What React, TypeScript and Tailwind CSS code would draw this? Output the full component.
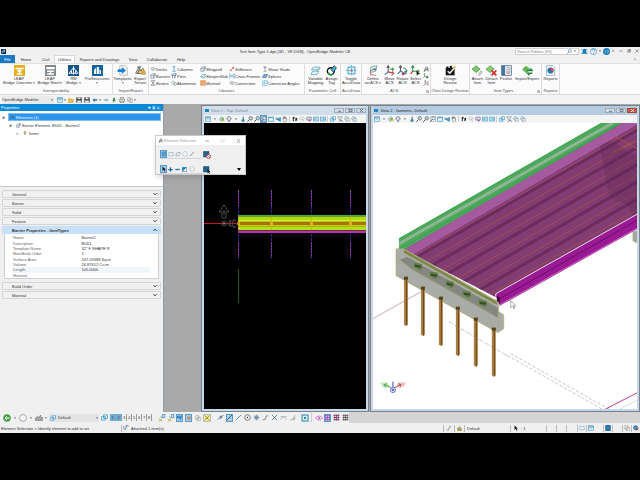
import { ReactNode, useState } from 'react';
import clsx from 'clsx';

// All glyphs are drawn on a 16x16 grid
const glyphs: Record<string, ReactNode> = {
  logo: <><rect width="16" height="16" fill="#0b2d52" /><path d="M3 11 8 4h5M3 13l6-5h4" stroke="#e8f3fc" strokeWidth="2" fill="none" /></>,
  leapConcrete: <><rect width="16" height="16" fill="#e5ae1d" /><path d="M2 4h12v2H2zM5 7h6v2l-2 1v2h3v2H4v-2h3v-2L5 9z" fill="#fff" /></>,
  leapSteel: <><rect width="16" height="16" fill="#85888b" /><path d="M2 3h12v3H2zM3 8h10v2H9v2h4v2H3v-2h4v-2H3z" fill="#fff" /></>,
  rmBridge: <><rect width="16" height="16" fill="#145488" /><path d="M8 2v12M2 11 8 4l6 7M1 12h14M5 12V8m6 4V8" stroke="#fff" strokeWidth="1.4" fill="none" /></>,
  pro: <><rect width="16" height="16" fill="#12639a" /><path d="M3 13V7l3-3v9zM7 13V3h3v10zM11 13V6l2 2v5z" fill="#fff" /></>,
  templates: <><path d="M4 1h8l3 3v11H4z" fill="#f5f5f5" stroke="#aaa" /><path d="M1 6h6V3l6 5-6 5v-3H1z" fill="#1c7fca" /></>,
  terrain: <><path d="M1 12 5 4l4 3 3-2 3 8z" fill="#ded5a0" stroke="#4a4a40" /><path d="M3 3h5m-2-2 2 2-2 2M4 13l2-6 4 2 2 4" stroke="#333" fill="none" /><path d="M9 9h6v5H9z" fill="#e2a33a" /></>,
  deck: <path d="M1 7c3-4 8-4 14 0-3 6-9 6-14 0zM5 8h6" fill="none" stroke="#647484" strokeWidth="1.4" />,
  barrier: <path d="M2 14V7l4-5h8l-4 5v7zM2 7h8l4-5v7l-4 5" fill="#eef3f7" stroke="#556575" strokeWidth="1.3" />,
  beam: <path d="M2 2h12M2 14h12M4 3l4 5-4 5M12 3 8 8l4 5" fill="none" stroke="#555" strokeWidth="1.5" />,
  column: <path d="M4 2h8M8 2v11M3 14h10" stroke="#3293cf" strokeWidth="1.8" fill="none" />,
  pier: <path d="M1 5l5-3h9l-3 4H1zM4 6v8M9 6v8M12 4v8" stroke="#44617a" strokeWidth="1.5" fill="none" />,
  abutment: <path d="M1 8 6 2l4 4-5 6zM8 9l5-3 2 6-6 3z" fill="#f5f5f5" stroke="#5c7082" strokeWidth="1.2" />,
  sleeper: <path d="M1 10l6-6h8l-5 6zM5 13h7l3-5" fill="none" stroke="#258db5" strokeWidth="1.5" />,
  material: <><rect x="1" y="1" width="14" height="14" fill="#e5812b" /><path d="M1 6h14M1 11h14M6 1v14M11 1v14" stroke="#fff2de" /></>,
  stiffener: <path d="M2 14 14 2M2 9l5 5M8 3l5 5" stroke="#b43c39" strokeWidth="1.8" fill="none" />,
  frames: <path d="M2 1v14M14 1v14M2 4l12 8M2 12l12-8" stroke="#3c91c5" strokeWidth="1.5" fill="none" />,
  splice: <path d="M1 12 5 4h10l-4 8zM4 8h8" fill="#9fcbe5" stroke="#175f8c" strokeWidth="1.5" />,
  stud: <path d="M5 2h6v3H5zM8 5v9M4 14h8" stroke="#60707b" strokeWidth="1.4" fill="none" />,
  angle: <path d="M2 1v14h12M6 2v8h8V2z" stroke="#269ac9" strokeWidth="1.5" fill="none" />,
  mapping: <><path d="M5 3h9l-3 4H2zM4 9h9l-3 5H1z" fill="#e5f2f8" stroke="#3e9cc0" /><path d="m13 7 2-3m-5 5 2-2" stroke="#3a8a52" /></>,
  tag: <><circle cx="7" cy="9" r="5" fill="#fff" stroke="#111" strokeWidth="2" /><path d="m7 6 5-5 3 3-4 7z" fill="#43a8d8" stroke="#222" /><path d="m3 11 4 4 3-2" stroke="#269b50" strokeWidth="2" fill="none" /></>,
  accu: <><rect x="3" y="3" width="10" height="10" fill="#e8f6fc" stroke="#3aa5d8" strokeWidth="1.5" /><path d="M8 0v16M0 8h16" stroke="#3aa5d8" strokeDasharray="3 1" /><circle cx="8" cy="8" r="2" fill="#d67463" /></>,
  define: <><path d="M4 3 13 1 11 9 3 11z" fill="#e1f1e8" stroke="#53938b" /><path d="M4 15V8l8-3M4 14l8 1" stroke="#bd4441" fill="none" /><path d="m7 6 5 1" stroke="#2b7bb8" strokeWidth="2" /></>,
  acsMove: <><path d="M6 10V2M4 4l2-3 2 3" stroke="#555" strokeWidth="1.5" fill="none" /><path d="M6 10 1 14" stroke="#3b6cc6" strokeWidth="1.8" /><path d="m6 10 8 2-2-3m2 3-3 3" stroke="#bf3838" strokeWidth="1.5" fill="none" /><path d="M9 6h5m-2-2 2 2-2 2" stroke="#2d934a" strokeWidth="1.5" fill="none" /></>,
  acsRotate: <><path d="M5 9V2M3 4l2-3 2 3" stroke="#555" strokeWidth="1.5" fill="none" /><path d="M5 9 1 13m4-4 9 4" stroke="#3b6cc6" strokeWidth="1.6" /><path d="M9 4q6 1 4 7m-2-2 2 2 2-3" stroke="#2d934a" strokeWidth="1.5" fill="none" /><circle cx="9" cy="13" r="2" fill="#bf3838" /></>,
  acsSelect: <><path d="M4 9V2M2 4l2-3 2 3M4 9h9m-2-2 2 2-2 2" stroke="#2d934a" strokeWidth="1.6" fill="none" /><path d="M4 9 1 13" stroke="#bf3838" strokeWidth="1.8" /><path d="m9 8 6 5-3 .500-2 2z" fill="#222" /></>,
  review: <><path d="M1 4h13v11H1z" fill="#171717" /><path d="M2 2h3v3H2zM7 1h3v4H7z" fill="#171717" /><path d="m4 9 3 3 7-8" stroke="#fff" strokeWidth="2" fill="none" /><path d="m11 5 3-4 2 2-4 3z" fill="#e0b52e" /></>,
  attach: <><path d="m6 1 6 5-6 5-6-5z" fill="#7fc66b" stroke="#499641" /><path d="m9 14 4-5q2 0 1 2l-4 5" fill="none" stroke="#777" /></>,
  detach: <><path d="m6 1 6 5-6 5-6-5z" fill="#8acb79" stroke="#499641" /><path d="m8 8 7 7m0-7-7 7" stroke="#d52727" strokeWidth="2.5" /></>,
  picklist: <><rect x="1" y="1" width="14" height="14" fill="#eef4fa" stroke="#385c80" /><path d="M1 1h5v14H1z" fill="#4577a8" /><path d="M8 4h6M8 7h6M8 10h6" stroke="#777" /><path d="M8 12h5" stroke="#bd4141" /></>,
  impexp: <><path d="m6 1 6 5-6 6-6-6z" fill="#67b850" /><path d="M7 8h8l-3-3M15 12H8l3 3" stroke="#238046" strokeWidth="2" fill="none" /></>,
  reports: <><path d="M2 1h9l3 3v11H2z" fill="#fff" stroke="#7396b6" /><circle cx="8" cy="8" r="4.5" fill="#2672b2" /><path d="M8 8V3.500a4.500 4.500 0 0 1 4 6z" fill="#dc4b34" /></>,
  undo: <path d="M1 8 7 3v3h7v4H7v3z" fill="#257bb8" />,
  redo: <path d="m15 8-6-5v3H2v4h7v3z" fill="#91bad6" />,
  folder: <path d="M1 4h5l2 2h7l-2 9H1z" fill="#edbb4f" stroke="#c4932c" />,
  save: <><path d="M1 1h14v14H1z" fill="#26272b" /><path d="M4 1h8v5H4zM3 9h10v6H3z" fill="#e9edf0" /></>,
  view: <><rect x="1" y="2" width="14" height="12" fill="#e9f6fc" stroke="#388fbc" strokeWidth="1.5" /><path d="M1 5h14" stroke="#388fbc" strokeWidth="2.5" /><path d="m4 11 3-3 4 3" stroke="#38909d" fill="none" /></>,
  pin: <path d="m5 3 6-2-1 5 3 4-4 1-4 4 1-5-3-2 4-2z" fill="#33834c" />,
  print: <path d="M4 1h8v5h3v6h-3v3H4v-3H1V6h3zM4 6h8M4 11h8" fill="#eef1e8" stroke="#566256" strokeWidth="1.4" />,
  copy: <path d="M2 2h8v9H2zM6 6h8v9H6z" fill="#fff" stroke="#777" strokeWidth="1.3" />,
  bulb: <path d="M3 6a5 5 0 1 1 10 0L10 11v4H6v-4z" fill="#b6bb65" stroke="#636836" />,
  search: <><circle cx="9" cy="6" r="4.500" fill="none" stroke="#3384b7" strokeWidth="2" /><path d="m6 10-5 5" stroke="#3384b7" strokeWidth="2.5" /></>,
  bell: <path d="M1 3h2v2H1zM13 3h2v2h-2zM1 11h2v2H1zM13 11h2v2h-2zM4 4q4-5 8 0v6l2 3H2l2-3z" fill="#1578b5" />,
  help: <><circle cx="8" cy="8" r="7" fill="#fff" stroke="#2585bd" strokeWidth="1.5" /><path d="M5 6q0-3 3-3t3 3q0 1.500-3 3v1M8 12v1.500" stroke="#2585bd" strokeWidth="1.8" fill="none" /></>,
  user: <><circle cx="8" cy="8" r="8" fill="#2382bd" /><path d="M4 6h3v4H4M9 6h3v4H9" stroke="#9fcce8" strokeWidth="1.2" fill="none" /></>,
  shade: <><path d="M2 6 7 2l5 3v6l-6 3-4-3z" fill="#b7d9c7" stroke="#4b897d" /><path d="m6 11 4-8 4 8z" fill="#55ad69" /><circle cx="12" cy="12" r="3" fill="#e7c33a" /></>,
  bright: <><circle cx="8" cy="7" r="5" fill="#e1e8ed" stroke="#52687a" strokeWidth="1.5" /><path d="M5 13h6M6 15h4M8 0v3M1 7h3m8 0h3" stroke="#52687a" strokeWidth="1.5" /></>,
  brush: <path d="M7 1h3v7l2 2v5H4v-5l3-2z" fill="#45849f" />,
  zoomIn: <><circle cx="10" cy="6" r="4.500" fill="#f3f8fb" stroke="#425968" strokeWidth="2" /><path d="m6 10-5 5" stroke="#4f4038" strokeWidth="2.5" /><path d="M8 6h4M10 4v4" stroke="#3184bd" /></>,
  zoomWin: <><path d="M1 1h14v14H1z" fill="none" stroke="#6d8190" /><circle cx="9" cy="6" r="4" fill="#fff" stroke="#374b59" strokeWidth="1.5" /><path d="m6 9-5 6" stroke="#333" strokeWidth="2" /></>,
  fit: <path d="M1 3h14v11H1zM1 5h14" fill="#fff" stroke="#3291c5" strokeWidth="2" />,
  rotate: <path d="M1 8 6 4v3h5v6M12 4v10h3V4z" fill="#2f8dc5" stroke="#2879aa" />,
  pan: <path d="m4 9-2-4 3 2V1l2 5 1-4 1 5 3-2v8l-3 3H6z" fill="#fff" stroke="#333" strokeWidth="1.2" />,
  walk: <path d="M2 3q4-3 5 1L5 9H2zM9 6q4-3 5 1l-2 6H9zM2 10h3v3H2zM9 14h3" fill="#1d242a" />,
  fly: <path d="M1 7q7-9 14 0-7 8-14 0zM8 7l5 8" fill="none" stroke="#999" strokeWidth="1.2" />,
  navigate: <><path d="M2 3h12v8H2z" fill="#d3dde9" stroke="#556b88" strokeWidth="1.5" /><path d="m6 8 7 4-4 3z" fill="#b33d51" /></>,
  prev: <path d="M1 3h14v10H1zM13 8H4m3-3L4 8l3 3" fill="#fff" stroke="#2588bd" strokeWidth="1.8" />,
  next: <path d="M1 3h14v10H1zM3 8h9M9 5l3 3-3 3" fill="#fff" stroke="#2588bd" strokeWidth="1.8" />,
  cascade: <path d="M6 2h9v8H6zM1 6h9v8H1z" fill="#e5f5fc" stroke="#2e8fbd" strokeWidth="1.6" />,
  clip: <><path d="M2 2h12l-4 6v5l-4 2V8z" fill="#edf3f5" stroke="#536c79" strokeWidth="1.3" /><path d="m10 10 5 5" stroke="#333" strokeWidth="2" /></>,
  clipMask: <><circle cx="7" cy="7" r="5" fill="#e6f1f6" stroke="#4889a7" strokeWidth="1.5" /><path d="M7 7h7v7H7z" fill="#fff" stroke="#607887" strokeWidth="1.3" /></>,
  element: <path d="M3 15 8 2l5 3v10M6 9h7M3 14l10-7" fill="none" stroke="#555" strokeWidth="1.8" />,
  block: <rect x="2" y="4" width="12" height="9" fill="none" stroke="#589ac3" strokeDasharray="3 1" strokeWidth="1.5" />,
  shape: <path d="M2 13 5 4h9l-3 9z" fill="none" stroke="#7390a4" strokeWidth="1.4" />,
  circle: <circle cx="8" cy="8" r="6.500" fill="none" stroke="#6ba2c2" strokeDasharray="2 1" strokeWidth="1.4" />,
  line: <path d="M2 14 14 2" stroke="#456f87" strokeWidth="1.7" />,
  individual: <><rect x="2" y="2" width="12" height="12" fill="#5c9cc8" stroke="#32739e" strokeDasharray="2 1" /></>,
  cursor: <path d="M4 1v12l3-3 3 5 2-1-3-5h4z" fill="#111" />,
  plus: <path d="M8 1v14M1 8h14" stroke="#176fae" strokeWidth="4" />,
  minus: <path d="M1 8h14" stroke="#176fae" strokeWidth="4" />,
  invert: <><path d="M1 1h14v14H1z" fill="#fff" stroke="#276e9d" strokeWidth="2" /><path d="M1 15V1h14z" fill="#1780bc" /></>,
  clearSel: <><path d="M1 1h11v11H1z" fill="#20648e" stroke="#153e58" /><circle cx="11" cy="11" r="4" fill="#fff" stroke="#d33d49" strokeWidth="2" /><path d="m8 8 6 6" stroke="#d33d49" strokeWidth="1.6" /></>,
  pickSel: <><path d="M1 1h11v11H1z" fill="#20648e" stroke="#153e58" /><path d="m9 7 6 5-3 .500 2 3-1 .500-2-3-2 2z" fill="#111" /></>,
  back: <><circle cx="8" cy="8" r="7.500" fill="#429f3d" /><path d="M13 8H4m4-4L4 8l4 4" stroke="#fff" strokeWidth="2" fill="none" /></>,
  forward: <><circle cx="8" cy="8" r="7" fill="#eee" stroke="#999" strokeWidth="1.5" /><path d="M3 8h9M8 4l4 4-4 4" stroke="#fff" strokeWidth="2" fill="none" /></>,
  model: <path d="M1 8 5 5l3 2 3-5 1 5h3v6H1z" fill="#a3a8a8" stroke="#666" />,
  snapKey: <><path d="M9 1h5v6H9zM5 5l3 3" stroke="#3b8dbf" fill="#d2e8f4" strokeWidth="1.5" /><path d="m2 9 6 6m0-6-6 6" stroke="#c3a62c" strokeWidth="2" /></>,
  hbar: <path d="M1 3h14v5H1zM8 8v6" stroke="#186ea5" fill="#65acd7" strokeWidth="2" />,
  star: <path d="M8 2v12M2 8h12M4 4l8 8m0-8-8 8" stroke="#d46a31" strokeWidth="1.6" />,
  crossY: <><path d="M1 1h14v14H1z" fill="#f7e79b" stroke="#6a9dbe" /><path d="m3 3 10 10m0-10L3 13" stroke="#b49b28" strokeWidth="2" /></>,
  near: <path d="M1 13q3-3 5-3t3-4l6-3M7 5h4v4H7z" fill="none" stroke="#456c82" strokeWidth="1.6" />,
  keypoint: <path d="M2 14 14 2" stroke="#143f62" strokeWidth="1.8" />,
  center: <><circle cx="8" cy="8" r="6.500" fill="none" stroke="#333" strokeWidth="1.3" /><circle cx="8" cy="8" r="1.500" fill="#333" /></>,
  gear: <><circle cx="8" cy="8" r="4" fill="#cadce6" stroke="#51758d" strokeWidth="1.5" /><path d="M8 1v14M1 8h14M3 3l10 10m0-10L3 13" stroke="#51758d" strokeWidth="1" /></>,
  curve: <path d="M2 13q6 2 6-4t6-5" stroke="#45606f" strokeWidth="1.6" fill="none" />,
  cross: <path d="M2 2l12 12m0-12L2 14" stroke="#3f5866" strokeWidth="1.6" />,
  tangent: <path d="M1 13q7-12 14 0M1 6h14" stroke="#999" strokeWidth="1.3" fill="none" />,
  perp: <path d="M13 2v11H2m7 0V9h4" stroke="#888" strokeWidth="1.3" fill="none" />,
  origin: <><rect x="2" y="2" width="12" height="12" fill="#e1f3f9" stroke="#2982a8" strokeWidth="2" /><path d="M6 6h4v4H6z" fill="#2d88ac" /></>,
  eye: <><path d="M1 8q7-8 14 0-7 8-14 0z" fill="none" stroke="#c35bbd" strokeWidth="1.5" /><circle cx="8" cy="8" r="2" fill="#c35bbd" /></>,
  gridP: <path d="M1 3h14M1 8h14M1 13h14M3 1v14M8 1v14M13 1v14" stroke="#b045b1" strokeWidth="1.8" />,
  gridM: <path d="M1 3h14M1 8h14M1 13h14M4 1v14M8 1v14M12 1v14" stroke="#7e315f" strokeWidth="1.8" />,
  gridD: <path d="M1 3h14M1 8h14M1 13h14M4 1v14M8 1v14M12 1v14" stroke="#4e454b" strokeWidth="1.6" />,
  lock: <><path d="M5 7V4q3-4 6 0v3" fill="none" stroke="#777" strokeWidth="2" /><path d="M2 7h12v8H2z" fill="#a6a43b" stroke="#706a26" /></>,
  info: <path d="M2 3v7q4 4 6 0V2h7M8 5l3-3" fill="none" stroke="#37618b" strokeWidth="1.7" />,
  book: <path d="M2 1h12v14H2z" fill="#217fb8" stroke="#174f75" strokeWidth="2" />,
  globe: <><circle cx="7" cy="7" r="6" fill="#3c8fca" stroke="#276b9b" /><path d="m8 8 7 7m0-7-7 7" stroke="#cf3030" strokeWidth="2" /></>,
};

const Glyph = ({ name, className = 'size-[6px]' }: { name: string; className?: string }) => (
  <svg viewBox="0 0 16 16" aria-hidden="true" className={clsx('shrink-0', className)}>
    {glyphs[name]}
  </svg>
);

const Caret = () => (
  <svg viewBox="0 0 4 4" aria-hidden="true" className="size-[2px] shrink-0">
    <path d="M0 1h4L2 3.500z" fill="#333" />
  </svg>
);

const IconButton = ({ name, active = false, size = 'size-[6px]' }: { name: string; active?: boolean; size?: string }) => (
  <button
    aria-label={name}
    className={clsx('flex w-[7px] h-[8px] shrink-0 items-center justify-center', active && 'bg-[#a9cfe9] outline outline-[#5b9ac6] -outline-offset-1')}
  >
    <Glyph name={name} className={size} />
  </button>
);

type Tool = { icon: string; lines: string[]; width: string; menu?: boolean };

const BigTool = ({ icon, lines, width, menu }: Tool) => (
  <button className={clsx('flex flex-col items-center shrink-0 whitespace-nowrap leading-[4px]', width)}>
    <Glyph name={icon} className="size-[11px] mb-px" />
    {lines.map((line, i) => (
      <span key={line} className="flex items-center gap-px">
        {line}
        {menu && lines.length > 1 && i === lines.length - 1 && <Caret />}
      </span>
    ))}
    {menu && lines.length === 1 && <span className="mt-px"><Caret /></span>}
  </button>
);

const Group = ({ caption, className, launcher = false, children }: { caption: string; className: string; launcher?: boolean; children: ReactNode }) => (
  <section className={clsx('flex flex-col justify-between shrink-0 border-r border-[#dedede] pt-px', className)}>
    <div className="flex h-[24px] justify-center">{children}</div>
    <div className="flex items-center leading-[6px] whitespace-nowrap text-[#555]">
      <span className="flex flex-1 justify-center">{caption}</span>
      {launcher && (
        <svg viewBox="0 0 6 6" className="size-[3px] mr-px" fill="none" stroke="#777"><path d="M1 5V1h4M2 2l3 3m0-3v3H2" /></svg>
      )}
    </div>
  </section>
);

const libraries = [
  { width: 'w-[21px]', items: [['deck', 'Decks'], ['barrier', 'Barriers'], ['beam', 'Beams']] },
  { width: 'w-[29px]', items: [['column', 'Columns'], ['pier', 'Piers'], ['abutment', 'Abutments']] },
  { width: 'w-[29px]', items: [['barrier', 'Wingwall'], ['sleeper', 'SleeperSlab'], ['material', 'Material']] },
  { width: 'w-[33px]', items: [['stiffener', 'Stiffeners'], ['frames', 'Cross Frames'], ['deck', 'Connection']] },
  { width: 'w-[41px]', items: [['stud', 'Shear Studs'], ['splice', 'Splices'], ['angle', 'Connector Angles']] },
];

const tabs = [
  { label: 'File', width: 'w-[15px]' },
  { label: 'Home', width: 'w-[22px]' },
  { label: 'Civil', width: 'w-[17px]' },
  { label: 'Utilities', width: 'w-[21px]' },
  { label: 'Reports and Drawings', width: 'w-[49px]' },
  { label: 'View', width: 'w-[18px]' },
  { label: 'Collaborate', width: 'w-[30px]' },
  { label: 'Help', width: 'w-[18px]' },
];

const WindowControls = () => (
  <div className="flex items-center gap-[4px] pl-[3px] text-[#444]">
    {['M1 8h14', 'M3 5h8v8H3zM6 5V2h8v8h-3', 'm2 2 12 12m0-12L2 14'].map(d => (
      <button key={d} aria-label="window">
        <svg viewBox="0 0 16 16" className="size-[4px]" fill="none" stroke="currentColor" strokeWidth="2"><path d={d} /></svg>
      </button>
    ))}
  </div>
);

const TitleBar = () => (
  <header className="flex h-[8px] items-center bg-[#f0f0f0]">
    <div className="flex-1 pl-[1px]"><Glyph name="logo" className="size-[5px]" /></div>
    <h1 className="whitespace-nowrap pr-[50px]">Test Item Type 1.dgn [3D - V8 DGN] - OpenBridge Modeler CE</h1>
    <div className="flex flex-1 items-center justify-end gap-[2px] pr-px">
      <label className="flex h-[7px] w-[64px] items-center border border-[#cfcfcf] bg-white pr-px">
        <input type="search" aria-label="Search Ribbon" placeholder="Search Ribbon (F4)" className="h-[5px] w-[51px] pl-px leading-[5px] outline-none placeholder:text-[#888]" />
        <Glyph name="search" className="size-[5px] mr-[2px]" />
        <Caret />
      </label>
      <Glyph name="bell" className="size-[7px]" />
      <Glyph name="help" className="size-[7px]" />
      <Caret />
      <Glyph name="user" className="size-[7px]" />
      <Caret />
      <WindowControls />
    </div>
  </header>
);

const Tabs = () => {
  const [current, setCurrent] = useState('Utilities');
  return (
    <nav className="flex h-[9px] items-end bg-[#f0f0f0] border-b border-[#e2e2e2]">
      {tabs.map(tab => (
        <button
          key={tab.label}
          onClick={() => setCurrent(tab.label)}
          className={clsx(
            'h-[8px] whitespace-nowrap text-center leading-[7px]',
            tab.width,
            tab.label === 'File' && 'bg-[#1a79c4] text-white',
            tab.label !== 'File' && current === tab.label && 'border border-b-0 border-[#d8d8d8] bg-white'
          )}
        >
          {tab.label}
        </button>
      ))}
      <span className="ml-auto pr-[4px] leading-[7px]">^</span>
    </nav>
  );
};

const Ribbon = () => (
  <div className="flex h-[31px] bg-[#fbfbfb] border-b border-[#d9d9d9] overflow-hidden">
    <Group caption="Interoperability" className="w-[113px]">
      <BigTool icon="leapConcrete" lines={['LEAP', 'Bridge Concrete']} width="w-[35px]" menu />
      <BigTool icon="leapSteel" lines={['LEAP', 'Bridge Steel']} width="w-[27px]" menu />
      <BigTool icon="rmBridge" lines={['RM', 'Bridge']} width="w-[20px]" menu />
      <BigTool icon="pro" lines={['ProStructures']} width="w-[27px]" menu />
    </Group>
    <Group caption="Import/Export" className="w-[36px]">
      <BigTool icon="templates" lines={['Templates']} width="w-[19px]" menu />
      <BigTool icon="terrain" lines={['Export', 'Terrain']} width="w-[16px]" />
    </Group>
    <Group caption="Libraries" className="w-[156px]">
      {libraries.map(col => (
        <div key={col.items[0][1]} className={clsx('flex flex-col gap-px pt-px', col.width)}>
          {col.items.map(([icon, label]) => (
            <button key={label} className="flex h-[6px] items-center whitespace-nowrap">
              <Glyph name={icon} />
              {label}
            </button>
          ))}
        </div>
      ))}
    </Group>
    <Group caption="Parametric Cell" className="w-[36px]">
      <BigTool icon="mapping" lines={['Variable', 'Mapping']} width="w-[18px]" />
      <BigTool icon="tag" lines={['Assign', 'Tag']} width="w-[14px]" />
    </Group>
    <Group caption="AccuDraw" className="w-[21px]">
      <BigTool icon="accu" lines={['Toggle', 'AccuDraw']} width="w-[20px]" />
    </Group>
    <Group caption="ACS" className="w-[69px]" launcher>
      <BigTool icon="define" lines={['Define', 'an ACS']} width="w-[20px]" menu />
      <BigTool icon="acsMove" lines={['Move', 'ACS']} width="w-[13px]" />
      <BigTool icon="acsRotate" lines={['Rotate', 'ACS']} width="w-[13px]" />
      <BigTool icon="acsSelect" lines={['Select', 'ACS']} width="w-[13px]" />
      <div className="flex flex-col gap-px pt-px pl-px">
        <Glyph name="element" />
        <Glyph name="acsSelect" />
        <Glyph name="acsMove" />
      </div>
    </Group>
    <Group caption="iTwin Design Review" className="w-[39px]">
      <BigTool icon="review" lines={['Design', 'Review']} width="w-[20px]" />
    </Group>
    <Group caption="Item Types" className="w-[72px]" launcher>
      <BigTool icon="attach" lines={['Attach', 'Item']} width="w-[14px]" />
      <BigTool icon="detach" lines={['Detach', 'Item']} width="w-[14px]" />
      <BigTool icon="picklist" lines={['Picklist']} width="w-[15px]" />
      <BigTool icon="impexp" lines={['Import/Export']} width="w-[27px]" />
    </Group>
    <Group caption="Reports" className="w-[18px]">
      <BigTool icon="reports" lines={['Reports']} width="w-[16px]" />
    </Group>
  </div>
);

const QuickAccess = () => (
  <div className="flex h-[9px] items-center bg-[#f4f4f4] pl-[2px]">
    <label className="flex h-[8px] w-[52px] items-center bg-[#eaeaea] pr-px">
      <select aria-label="Workflow" className="w-full leading-[7px] outline-none appearance-none">
        <option>OpenBridge Modeler</option>
      </select>
      <Caret />
    </label>
    <div className="flex items-center gap-px pl-[2px]">
      <IconButton name="view" />
      <Caret />
      <IconButton name="folder" />
      <IconButton name="save" />
      <IconButton name="save" />
      <IconButton name="undo" />
      <Caret />
      <IconButton name="redo" />
      <IconButton name="pin" />
      <IconButton name="print" />
      <IconButton name="copy" />
      <Caret />
    </div>
  </div>
);

const details = [
  ['Name', 'Barrier2'],
  ['Description', 'BU01'],
  ['Template Name', '32" F SHAPE R'],
  ['MainBuild Order', '1'],
  ['Surface Area', '247.09488 Sq.m'],
  ['Volume', '26.87612 Cu.m'],
  ['Length', '105.0000'],
  ['Material', ''],
];

const Section = ({ title, open = false }: { title: string; open?: boolean }) => (
  <div>
    <button
      className={clsx(
        'flex h-[8px] w-full items-center justify-between rounded-[1px] border pl-[9px] pr-[3px]',
        open ? 'border-[#c5def5] bg-[#c9e1f8] font-bold' : 'border-[#d5d5d5] bg-[#f1f1f1]'
      )}
    >
      {title}
      <svg viewBox="0 0 16 16" aria-hidden="true" className="size-[4px]" fill="none" stroke="#222" strokeWidth="4">
        <path d={open ? 'm2 11 6-6 6 6' : 'm2 5 6 6 6-6'} />
      </svg>
    </button>
    {open && (
      <div className="mx-[2px] mb-[2px] border border-t-0 border-[#cfcfcf] bg-white px-[8px] pt-px">
        <table className="h-[43px] w-full border-collapse leading-[5px]">
          <tbody>
            {details.map(([key, value]) => (
              <tr key={key} className={clsx(key === 'Length' && 'bg-[#f0f6fb]')}>
                <th scope="row" className="w-1/2 p-0 text-left font-normal text-[#666]">{key}</th>
                <td className="p-0">{value}</td>
              </tr>
            ))}
          </tbody>
        </table>
      </div>
    )}
  </div>
);

const PropertiesPane = () => (
  <aside className="flex w-[164px] shrink-0 flex-col border-r border-[#8f9ba5] bg-[#f0f0f0]">
    <div className="flex h-[7px] items-center bg-[#0c88d5] pl-px pr-[2px] text-white">
      <h2 className="flex-1">Properties</h2>
      <svg viewBox="0 0 42 14" className="h-[4px] w-[14px]" fill="none" stroke="#fff" strokeWidth="2">
        <path d="M1 4h8L5 10z" fill="#fff" />
        <path d="M18 1h5v7h-5zM15 8h11M20.500 8v6M31 2l10 10m0-10L31 12" />
      </svg>
    </div>
    <ul className="h-[76px] border-b border-[#c4c8cc] bg-white px-[2px] pt-[2px]">
      <li className="flex h-[8px] items-center">
        <span className="w-[6px] text-[3px]">◢</span>
        <span className="flex h-full flex-1 items-center gap-[2px] border border-[#7fbdf0] bg-[#2b95ee] pl-px text-[#eaf5ff]">
          <Glyph name="element" className="size-[4px]" />
          Elements (1)
        </span>
      </li>
      <li className="flex h-[8px] items-center gap-px pl-[7px]">
        <span className="w-[6px] text-[3px]">◢</span>
        <Glyph name="barrier" className="size-[5px]" />
        Barrier Element: BU01 - Barrier2
      </li>
      <li className="flex h-[8px] items-center gap-[2px] pl-[14px]">
        <span className="w-[5px]">&gt;</span>
        <Glyph name="bulb" className="size-[4px]" />
        Items
      </li>
    </ul>
    <div className="flex flex-1 flex-col gap-px px-[2px] pt-[3px]">
      <Section title="General" />
      <Section title="Barrier" />
      <Section title="Solid" />
      <Section title="Feature" />
      <Section title="Barrier Properties - ItemTypes" open />
      <Section title="Build Order" />
      <Section title="Material" />
    </div>
  </aside>
);

const viewTools = ['view', '|', 'shade', 'bright', '|', 'brush', 'zoomIn', 'zoomIn', 'zoomWin', 'fit', 'rotate', 'pan', '-', 'walk', 'fly', 'navigate', 'prev', 'next', '-', 'cascade', 'clip', 'clipMask', 'clipMask'];

const ViewWindow = ({ title, focused = false, className, children }: { title: string; focused?: boolean; className: string; children: ReactNode }) => (
  <section className={clsx('flex min-w-0 flex-col border border-[#76838f] bg-[#c6d8e8] px-[2px] pb-[2px]', className)}>
    <div className={clsx('flex h-[9px] shrink-0 items-center gap-[2px] pl-px', focused ? 'bg-[#b5cbe1] text-[#222]' : 'bg-[#d2deea] text-[#7b8792]')}>
      <span className="h-[3px] w-[4px] bg-[#2483c4]" />
      <h2 className="flex-1">{title}</h2>
      {['minimize', 'maximize', 'close'].map(label => (
        <button
          key={label}
          aria-label={label}
          className={clsx('-ml-px flex h-[5px] w-[10px] items-center justify-center border', focused && label === 'close' ? 'border-[#a24a3c] bg-[#cf5a48] text-white' : 'border-[#a0adbb] bg-[#cfdbe8] text-[#555]')}
        >
          <svg viewBox="0 0 6 4" className="h-[3px] w-[5px]" fill="none" stroke="currentColor">
            <path d={label === 'minimize' ? 'M1 3h4' : label === 'maximize' ? 'M1 .500h4v3H1z' : 'm1 0 4 4m0-4L1 4'} />
          </svg>
        </button>
      ))}
    </div>
    <div className="flex h-[8px] shrink-0 items-center overflow-hidden bg-[#f4f4f4]">
      {viewTools.map((tool, i) => {
        if (tool === '|') return <span key={i} className="flex w-[7px] justify-center"><Caret /></span>;
        if (tool === '-') return <span key={i} className="ml-px mr-px h-[6px] w-px bg-[#ccc]" />;
        return <IconButton key={i} name={tool} active={!focused && tool === 'zoomWin'} />;
      })}
    </div>
    <div className="min-h-0 flex-1">{children}</div>
  </section>
);

const deckBands = [
  { y: 215, h: 1, fill: '#3fae3f' },
  { y: 216, h: 1, fill: '#6e9d1a' },
  { y: 217, h: 3, fill: '#a8dc14' },
  { y: 220, h: 1, fill: '#d9f03a' },
  { y: 221, h: 1, fill: '#b4c414' },
  { y: 222, h: 3, fill: '#a8720c' },
  { y: 225, h: 1, fill: '#c8cc18' },
  { y: 226, h: 1, fill: '#a8b414' },
  { y: 227, h: 3, fill: '#b0e016' },
  { y: 230, h: 1, fill: '#5c3a20' },
  { y: 231, h: 2, fill: '#c02cc0' },
];

const TopView = () => (
  <svg viewBox="203 123 163 286" preserveAspectRatio="xMinYMin slice" className="block h-full w-full bg-black">
    {[237, 270, 310, 349].map(x => (
      <g key={x}>
        <path d={`M${x + 0.5} 190v68`} stroke="#35249a" strokeDasharray="3 1" />
        <path d={`M${x + 0.5} 190v16m0 36v16`} stroke="#a03a9a" strokeDasharray="2 1" />
      </g>
    ))}
    <path d="M203 223.500h34" stroke="#c81420" />
    {deckBands.map(b => <rect key={b.y} x="237" y={b.y} width="140" height={b.h} fill={b.fill} />)}
    {[237, 270, 310, 349].map(x => <path key={x} d={`M${x} 217h1v13h-1zM${x - 1} 222h3v3h-3z`} fill="#d8b018" />)}
    <path d="M237.500 269v34" stroke="#1d5a1d" />
    <g fill="none" stroke="#4c4c4c">
      <path d="m223 205-5 7h3v6h4v-6h3zM221.500 210l1.500 2 1.500-2m-1.500 2v3" />
      <circle cx="223" cy="223.500" r="2.500" />
      <path d="M228 221h5v-2l4 4.500-4 4.500v-2h-5zM229 222l3 3m0-3-3 3" />
    </g>
    <circle cx="223" cy="223.500" r="1" fill="#999" />
  </svg>
);

const piles = [[406, 276], [423, 286], [441, 296], [458, 306], [476, 317], [494, 327]];
const seats = [[418, 265], [434, 274], [450, 283], [467, 293], [483, 302]];

// Longitudinal lines of the deck, parallel to the barriers
const girders = Array.from({ length: 30 }, (_, i) => {
  const x = 405 + i * 3.1;
  const y = 249 + i * 1.68;
  return { x, y, x2: 640, y2: y - (640 - x) * 0.575, warm: i % 5 === 2, shade: i % 5 === 4 };
});

const IsoView = () => (
  <svg viewBox="373 122 264 287" preserveAspectRatio="xMinYMin slice" className="block h-full w-full bg-white">
    <defs>
      <clipPath id="deck"><path d="M404 249 623 122h17v91L497 297z" /></clipPath>
    </defs>
    <path d="m373 318 48-27" stroke="#c9a9bb" />
    <path d="m449 321 60 35" stroke="#c4c4d4" strokeDasharray="4 1 1 1" />
    <path d="m508 355 95 54M511 353l99 56" stroke="#c3c3d3" strokeDasharray="3 2" />
    <path d="m605 409 35-18" stroke="#c43fae" />
    <path d="m620 409 20-11" stroke="#cfe6cf" />
    <path d="M633 231l4-1h3v12h-4l-3-2z" fill="#a3a796" />
    <path d="M399 238 602 122h24L404 250h-5z" fill="#4fa85d" />
    <path d="M399 243 613 122" stroke="#8fb592" strokeWidth="3" />
    <path d="M399 238 602 122M400 248 621 122" stroke="#2fa548" fill="none" />
    <path d="M404 249 623 122h17v91L497 297z" fill="#803b70" />
    <g clipPath="url(#deck)" fill="none">
      {girders.map((g, i) => (
        <path
          key={i}
          d={`M${g.x} ${g.y}L${g.x2} ${g.y2}`}
          stroke={g.warm ? '#9c5056' : g.shade ? '#6b2d5d' : '#8a4580'}
          strokeWidth={g.shade ? 3 : g.warm ? 1 : 0.5}
        />
      ))}
      <path d="M407 251 640 116" stroke="#a55a9f" strokeWidth="11" />
      <path d="M413 256 640 125" stroke="#b16468" strokeWidth="0.5" />
      <path d="m614 135 26 14M612 152l24-12" stroke="#a5573f" strokeWidth="1" />
      <path d="M600 145l10-5 32 18v60l-10-5-4-8-18-8z" fill="#56214a" fillOpacity=".25" />
    </g>
    <path d="M496 293 640 212v15L500 305z" fill="#9a1a94" />
    <path d="m500 304 140-78" stroke="#cc66c6" />
    <path d="m500 298 140-80" stroke="#6d0d6a" />
    <path d="M496 301v-8l144-81" stroke="#eadcea" fill="none" />
    <path d="M497 295l3 2v6h-3z" fill="#3a0b3c" />
    <path d="M396 248h8l93 52 2 2v9l5 3v14l-6 4-102-57z" fill="#a9aca6" />
    <path d="m400 259 7-3 91 51v10l-84-47z" fill="#84877f" />
    <path d="M404 249l93 52v3l-93-52z" fill="#7f8843" />
    {seats.map(([x, y]) => (
      <g key={x}>
        <path d={`M${x - 4} ${y - 3}l8 1v5l-3 1-5-3z`} fill="#627c44" />
        <path d={`M${x - 3} ${y - 1}l6 1v2l-6-1z`} fill="#2f4d26" />
      </g>
    ))}
    <path d="M396 248h8l93 52 2 2v9l5 3v14l-6 4-102-57zM396 259l98 55M499 311v15" fill="none" stroke="#a5a850" strokeWidth="0.500" />
    {piles.map(([x, y]) => (
      <g key={x}>
        <path d={`M${x - 2} ${y}h4v48l-2 1-2-1z`} fill="#ad8145" />
        <path d={`M${x + 0.5} ${y}v49`} stroke="#624521" />
        <path d={`M${x - 2} ${y}h4v3h-4z`} fill="#54441f" />
      </g>
    ))}
    <path d="M511 300v7l2-2 1 3 1-.500-1-2.500h2z" fill="#fff" stroke="#555" strokeWidth="0.500" />
    <g fill="none">
      <path d="M380 382h7l2 3v2h-6z" fill="#bfe8bb" />
      <path d="M397 384l3-2h6l-2 4h-7z" fill="#edbcbc" />
      <path d="m393 388-8-4m1 3-2-3 3-1" stroke="#4ea64e" />
      <path d="m393 388 8-4m-3-1 3 1-1 3" stroke="#b65757" />
      <path d="M393 387v-6" stroke="#3441a8" />
      <circle cx="393" cy="389.500" r="2.500" fill="#e4e6fc" stroke="#6670d8" />
      <circle cx="393" cy="389.500" r="1" fill="#3441c8" />
    </g>
  </svg>
);

const ElementSelection = () => (
  <section role="dialog" aria-label="Element Selection" className="absolute left-[155px] top-[31px] h-[40px] w-[91px] border border-[#c9c9c9] bg-[#f0f0f0] shadow-md">
    <div className="flex h-[9px] items-center gap-px bg-white pl-[2px] text-[#999]">
      <Glyph name="element" className="size-[5px]" />
      <h2 className="flex-1">Element Selection</h2>
      <svg viewBox="0 0 36 4" className="mr-[5px] h-[4px] w-[36px]" fill="none" stroke="#aaa">
        <path d="M1 2h4m28-2 3 4m0-4-3 4" /><path d="M17 0h3v3h-3z" stroke="#ddd" />
      </svg>
    </div>
    <div className="flex flex-col gap-[6px] px-[4px] pt-[5px]">
      <div className="flex items-center">
        <div className="flex w-[43px] border-b border-[#d5d5d5]">
          <IconButton name="individual" active />
          <IconButton name="block" />
          <IconButton name="shape" />
          <IconButton name="circle" />
          <IconButton name="line" />
        </div>
        <Glyph name="clearSel" className="size-[8px]" />
      </div>
      <div className="flex items-center">
        <div className="flex w-[43px] border-b border-[#d5d5d5]">
          <IconButton name="cursor" active />
          <IconButton name="plus" size="size-[5px]" />
          <IconButton name="minus" size="size-[5px]" />
          <IconButton name="invert" size="size-[5px]" />
          <IconButton name="circle" />
        </div>
        <Glyph name="pickSel" className="size-[8px]" />
        <span className="ml-auto">
          <svg viewBox="0 0 4 3" className="h-[3px] w-[4px]"><path d="M0 0h4L2 3z" /></svg>
        </span>
      </div>
    </div>
  </section>
);

const snapTools = ['near', 'keypoint', 'line', 'center', 'gear', 'curve', 'cross', 'tangent', 'perp'];

const BottomTools = () => (
  <div className="flex h-[11px] shrink-0 bg-[#d4d4d4]">
    <div className="flex items-center bg-[#f0f0f0] pl-[3px]">
      <Glyph name="back" className="size-[8px]" />
      <span className="px-[3px]"><Caret /></span>
      <Glyph name="forward" className="size-[8px]" />
      <span className="px-[3px]"><Caret /></span>
      <Glyph name="model" className="size-[8px]" />
      <span className="px-[2px]"><Caret /></span>
      <label className="flex h-[8px] w-[50px] items-center gap-[2px] bg-[#e3e3e3] px-px">
        <Glyph name="cascade" />
        <select aria-label="View group" className="w-full leading-[7px] outline-none appearance-none"><option>Default</option></select>
        <Caret />
      </label>
      <span className="px-[2px]"><Glyph name="cascade" className="size-[7px]" /></span>
      <div className="flex">
        {[1, 2, 3, 4, 5, 6, 7, 8].map(n => (
          <button key={n} className={clsx('h-[7px] border-r border-[#999] leading-[7px]', n < 3 ? 'w-[6px] bg-[#6aaedb]' : 'w-[5px]')}>{n}</button>
        ))}
      </div>
      <div className="flex items-center gap-[2px] pl-[6px]">
        <IconButton name="snapKey" size="size-[8px]" />
        <IconButton name="snapKey" size="size-[8px]" />
        <IconButton name="hbar" active />
        <IconButton name="star" active />
        <IconButton name="copy" />
        <IconButton name="crossY" size="size-[8px]" />
      </div>
      <div className="flex items-center gap-[2px] pl-[7px]">
        {snapTools.map(name => <IconButton key={name} name={name} active={name === 'keypoint'} size="size-[7px]" />)}
      </div>
      <div className="flex items-center gap-[2px] pl-[5px]">
        <IconButton name="origin" size="size-[8px]" />
        <span className="mx-px h-[9px] w-px bg-[#ccc]" />
        <IconButton name="eye" size="size-[8px]" />
        <IconButton name="gridP" active size="size-[7px]" />
        <IconButton name="gridM" size="size-[7px]" />
        <IconButton name="gridD" size="size-[7px]" />
      </div>
    </div>
  </div>
);

const Divider = () => <span className="h-[7px] w-px shrink-0 bg-[#bbb]" />;

const StatusBar = () => (
  <footer className="flex h-[10px] shrink-0 items-center bg-[#f0f0f0] pl-px">
    <p className="w-[120px]">Element Selection &gt; Identify element to add to set</p>
    <Divider />
    <p className="flex flex-1 items-center gap-[2px] pl-px">
      <Glyph name="info" />
      Attached 1 item(s).
    </p>
    <div className="flex items-center gap-[2px]">
      <Divider />
      <Glyph name="curve" />
      <Divider />
      <Glyph name="lock" className="size-[5px]" />
      <Divider />
      <span className="w-[41px]">Default</span>
      <Divider />
      <Glyph name="cursor" />
      <span className="w-[25px]">: 1</span>
    </div>
    <div className="flex gap-[9px] pr-[10px]">
      <Divider />
      <Divider />
      <Divider />
    </div>
    <div className="flex items-center gap-px pr-px">
      <Divider />
      <Glyph name="block" />
      <Divider />
      <Glyph name="view" />
      <span className="flex w-[9px] justify-end"><Divider /></span>
      <Glyph name="book" />
      <Divider />
      <span className="flex w-[9px] justify-end"><Divider /></span>
      <Glyph name="copy" />
      <Divider />
      <Glyph name="globe" />
    </div>
  </footer>
);

const App = () => (
  <div className="flex h-screen min-h-[300px] flex-col bg-black py-[47px] font-['Liberation_Sans',Arial,sans-serif] text-[4px] leading-[5px] text-[#333]">
    <TitleBar />
    <Tabs />
    <Ribbon />
    <QuickAccess />
    <main className="relative flex min-h-0 flex-1 bg-[#a9a9a9]">
      <PropertiesPane />
      <div className="flex min-w-0 flex-1 gap-px pl-[37px] pt-px">
        <ViewWindow title="View 1 - Top, Default" className="flex-[167]">
          <TopView />
        </ViewWindow>
        <ViewWindow title="View 2 - Isometric, Default" focused className="flex-[271]">
          <IsoView />
        </ViewWindow>
      </div>
      <ElementSelection />
    </main>
    <BottomTools />
    <StatusBar />
  </div>
);

export default App;
